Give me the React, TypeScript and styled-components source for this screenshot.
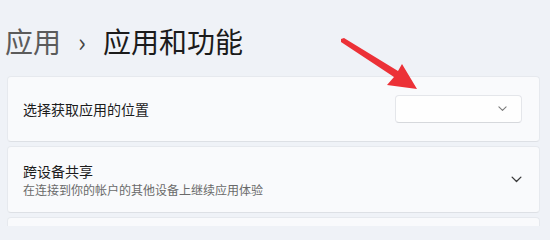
import React from 'react'
import styled, { createGlobalStyle } from 'styled-components'

const Global = createGlobalStyle`
body {
  margin: 0;
  background-color: #eff2f7;
  font-family: "Noto Sans CJK SC", "Noto Sans", sans-serif;
}
`

const Chevron = ({ size, color }: { size: number; color: string }) => (
  <svg width={size} height={size * 0.6} viewBox="0 0 10 6" fill="none">
    <path d="M1 1 L5 5 L9 1" stroke={color} strokeWidth="1.2" strokeLinecap="round" strokeLinejoin="round" />
  </svg>
)

const App = () => {
  return (
    <>
      <Global />
      <Page>
        <Header>
          <Crumb>应用</Crumb>
          <Sep>›</Sep>
          <Current>应用和功能</Current>
        </Header>
        <List>
          <Card h={66}>
            <Label>选择获取应用的位置</Label>
            <Select>
              <Chevron size={9} color="#7a7a7a" />
            </Select>
          </Card>
          <Card h={67}>
            <TextCol>
              <Label>跨设备共享</Label>
              <Sub>在连接到你的帐户的其他设备上继续应用体验</Sub>
            </TextCol>
            <ExpandBtn>
              <Chevron size={11} color="#3a3a3a" />
            </ExpandBtn>
          </Card>
          <Card h={40} />
        </List>
        <Arrow width="550" height="226" viewBox="0 0 550 226">
          <polygon
            points="341,39 344,38 398,71 402,64 417,89 387,85 394,77 341,42"
            fill="#ec3137"
          />
        </Arrow>
      </Page>
    </>
  )
}

export default App

const Page = styled.div`
position: relative;
width: 550px;
height: 226px;
overflow: hidden;
`
const Header = styled.div`
display: flex;
align-items: center;
height: 40px;
margin-top: 21px;
padding-left: 5px;
font-size: 28px;
line-height: 40px;
`
const Crumb = styled.span`
color: #5b5b5b;
`
const Sep = styled.span`
width: 42px;
text-align: center;
color: #444;
font-size: 26px;
`
const Current = styled.span`
color: #1b1b1b;
`
const List = styled.div`
display: flex;
flex-direction: column;
gap: 4px;
margin-top: 15px;
padding: 0 10px 0 7px;
`
const Card = styled.div<{ h: number }>`
height: ${p => p.h}px;
box-sizing: border-box;
display: flex;
align-items: center;
justify-content: space-between;
padding: 0 17px 0 15px;
background-color: #f9fafc;
border: 1px solid #e6e9ee;
border-bottom-color: #dde0e5;
border-radius: 4px;
`
const Label = styled.div`
font-size: 14px;
line-height: 20px;
color: #1c1c1c;
`
const Sub = styled.div`
font-size: 12px;
line-height: 18px;
color: #6a6a6a;
`
const TextCol = styled.div`
display: flex;
flex-direction: column;
`
const Select = styled.div`
width: 127px;
height: 28px;
box-sizing: border-box;
display: flex;
align-items: center;
justify-content: flex-end;
padding-right: 14px;
background-color: #fefefe;
border: 1px solid #e4e6ea;
border-bottom-color: #d6d8dc;
border-radius: 4px;
`
const ExpandBtn = styled.div`
display: flex;
align-items: center;
justify-content: center;
width: 12px;
`
const Arrow = styled.svg`
position: absolute;
left: 0;
top: 0;
pointer-events: none;
`
